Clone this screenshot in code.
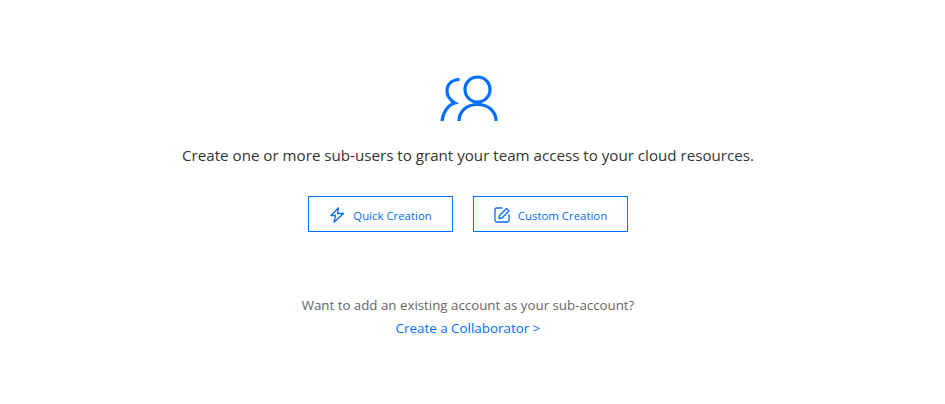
<div class="page">
  <svg class="hero" width="60" height="50" viewBox="0 0 60 50" fill="none" stroke="#006eff" stroke-width="3.200">
    <circle cx="37.500" cy="17.500" r="12.500" />
    <path d="M19 49c0-10 8-16.500 18.500-16.500S56 39 56 49" />
    <path d="M19.500 7.500C12 7.500 7 12 7 19c0 5 3 9 8 12-7 2-12 9-13 18" />
  </svg>
  <p class="lead">Create one or more sub-users to grant your team access to your cloud resources.</p>
  <div class="actions">
    <button class="quick">
      <svg width="16" height="16" viewBox="0 0 16 16" fill="none" stroke="#006eff" stroke-width="1.300" stroke-linejoin="round">
        <path d="M9.500.8 2 8.500h4.500L5 15.300l9.500-8.800H8.500z" />
      </svg>
      Quick Creation
    </button>
    <button class="custom">
      <svg width="16" height="16" viewBox="0 0 16 16" fill="none" stroke="#006eff" stroke-width="1.300">
        <path d="M8.500 1H2.500A1.500 1.500 0 0 0 1 2.500v11A1.500 1.500 0 0 0 2.500 15h11a1.500 1.500 0 0 0 1.500-1.500V7.500" />
        <path d="M12.500 1.500 15 4 8 11 5 11.500 5.500 8.500z" stroke-linejoin="round" />
      </svg>
      Custom Creation
    </button>
  </div>
  <p class="note">Want to add an existing account as your sub-account?</p>
  <a class="link" href="#collab">Create a Collaborator &gt;</a>
</div>

<style>
  :global(body) { margin: 0; background: #fff; }
  .page {
    height: 404px;
    box-sizing: border-box;
    padding: 72px 9px 0 0;
    display: flex;
    flex-direction: column;
    align-items: center;
    font-family: "Open Sans", "Noto Sans", sans-serif;
  }
  .hero { display: block; margin-left: 3px; }
  .lead { margin: 22px 0 0; font-size: 15.150px; line-height: 22px; color: #333; }
  .actions { display: flex; gap: 20px; margin-top: 30px; }
  button {
    height: 36px;
    box-sizing: border-box;
    display: flex;
    align-items: center;
    justify-content: center;
    gap: 8px;
    border: 1px solid #006eff;
    background: #fff;
    color: #006eff;
    font: inherit;
    font-size: 11.400px;
    padding: 2px 0 0;
  }
  .quick { width: 145px; }
  .custom { width: 155px; }
  .note { margin: 63px 0 0; font-size: 13.300px; line-height: 20px; color: #666; }
  .link { margin-top: 3px; font-size: 13.400px; line-height: 20px; color: #006eff; text-decoration: none; }
</style>
